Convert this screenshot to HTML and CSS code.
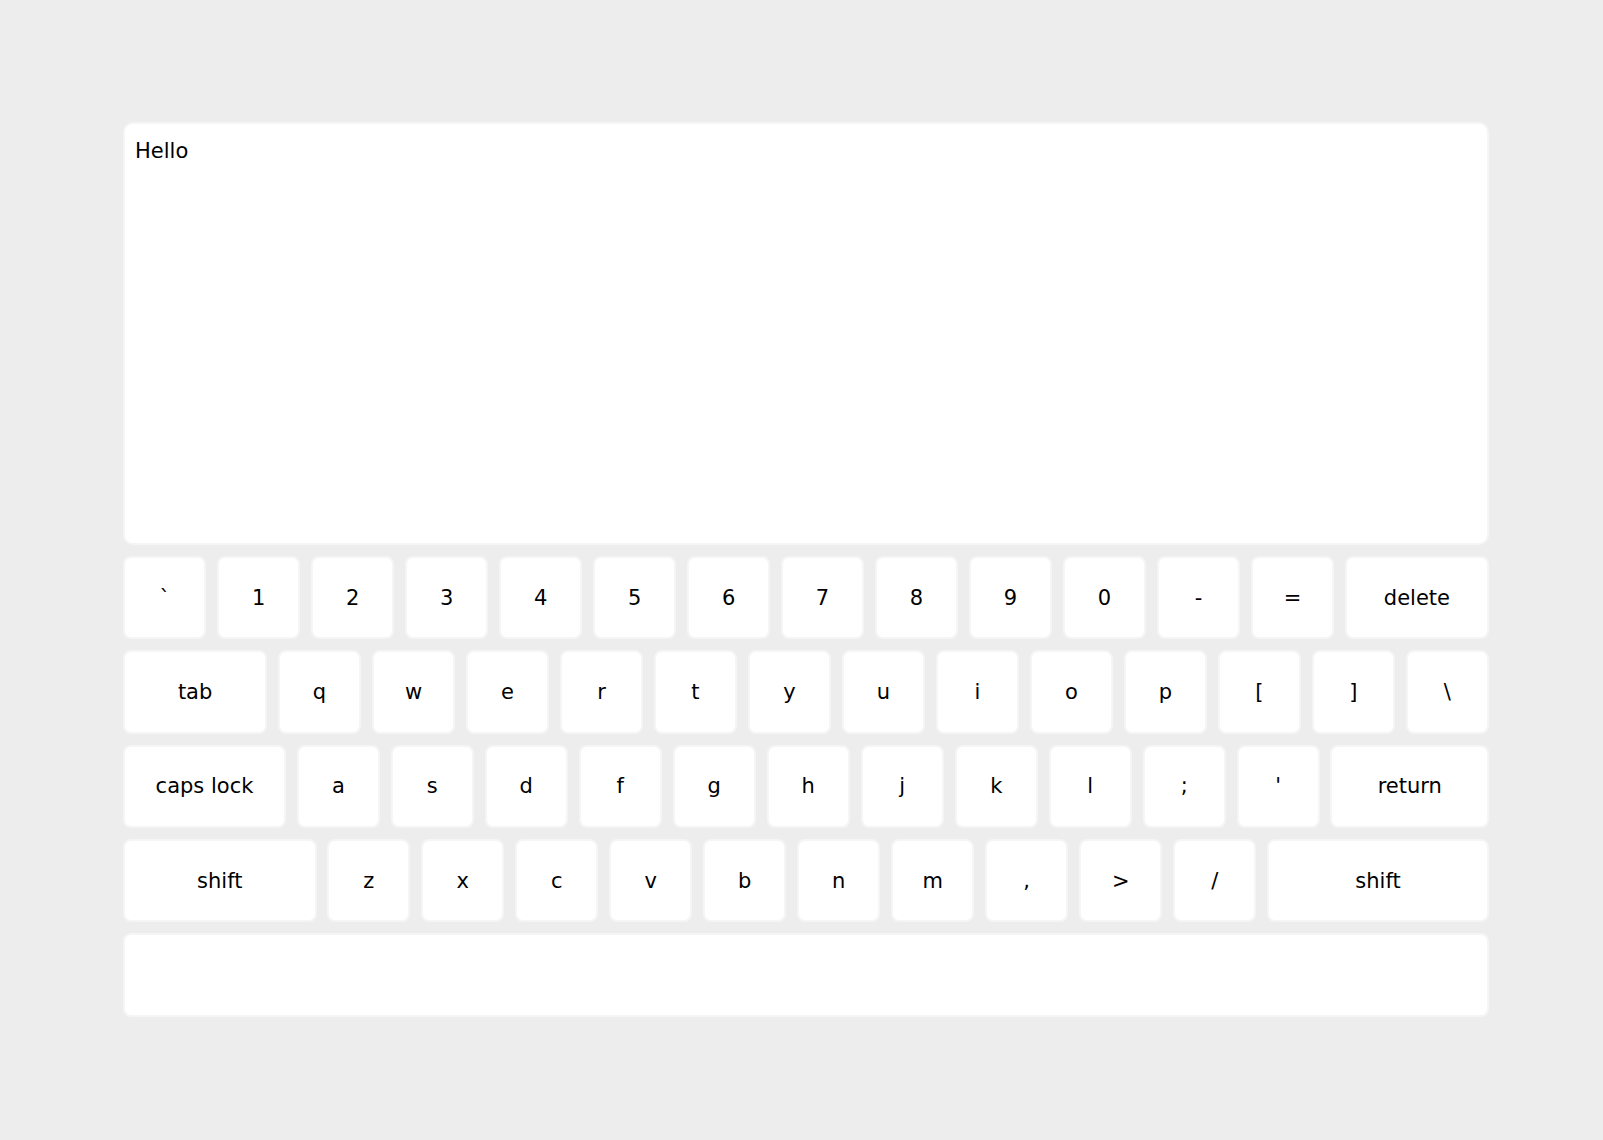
FILE: index.html
```html
<!DOCTYPE html>
<html>
<head>
<meta charset="utf-8">
<link rel="stylesheet" href="styles.css">
</head>
<body>
<div class="app">
  <div class="screen">Hello</div>
  <div class="keyboard">
    <div class="row">
      <div class="key">`</div><div class="key">1</div><div class="key">2</div><div class="key">3</div><div class="key">4</div><div class="key">5</div><div class="key">6</div><div class="key">7</div><div class="key">8</div><div class="key">9</div><div class="key">0</div><div class="key">-</div><div class="key">=</div><div class="key fill">delete</div>
    </div>
    <div class="row">
      <div class="key fill">tab</div><div class="key">q</div><div class="key">w</div><div class="key">e</div><div class="key">r</div><div class="key">t</div><div class="key">y</div><div class="key">u</div><div class="key">i</div><div class="key">o</div><div class="key">p</div><div class="key">[</div><div class="key">]</div><div class="key">\</div>
    </div>
    <div class="row">
      <div class="key caps">caps lock</div><div class="key">a</div><div class="key">s</div><div class="key">d</div><div class="key">f</div><div class="key">g</div><div class="key">h</div><div class="key">j</div><div class="key">k</div><div class="key">l</div><div class="key">;</div><div class="key">'</div><div class="key fill">return</div>
    </div>
    <div class="row">
      <div class="key lshift">shift</div><div class="key">z</div><div class="key">x</div><div class="key">c</div><div class="key">v</div><div class="key">b</div><div class="key">n</div><div class="key">m</div><div class="key">,</div><div class="key">&gt;</div><div class="key">/</div><div class="key fill">shift</div>
    </div>
    <div class="row">
      <div class="key fill"></div>
    </div>
  </div>
</div>
</body>
</html>
```

FILE: styles.css
```css
html, body {
  margin: 0;
  padding: 0;
  background: #ededed;
}
body {
  font-family: "DejaVu Sans", Verdana, sans-serif;
  font-size: 21px;
  color: #000;
}
.app {
  width: 1366px;
  margin: 122px 0 0 123px;
  display: flex;
  flex-direction: column;
  gap: 11px;
}
.screen {
  box-sizing: border-box;
  height: 423px;
  background: #fff;
  border: 2px solid #f5f5f5;
  border-radius: 10px;
  padding: 15px 10px;
}
.keyboard {
  display: flex;
  flex-direction: column;
  gap: 11px;
}
.row {
  display: flex;
  gap: 10.67px;
}
.key {
  box-sizing: border-box;
  width: 83.33px;
  height: 83.33px;
  flex: none;
  background: #fff;
  border: 2px solid #f5f5f5;
  border-radius: 8px;
  display: flex;
  align-items: center;
  justify-content: center;
}
.key.fill {
  flex: 1;
  width: auto;
}
.key.caps {
  width: 163px;
}
.key.lshift {
  width: 193.5px;
}
```
